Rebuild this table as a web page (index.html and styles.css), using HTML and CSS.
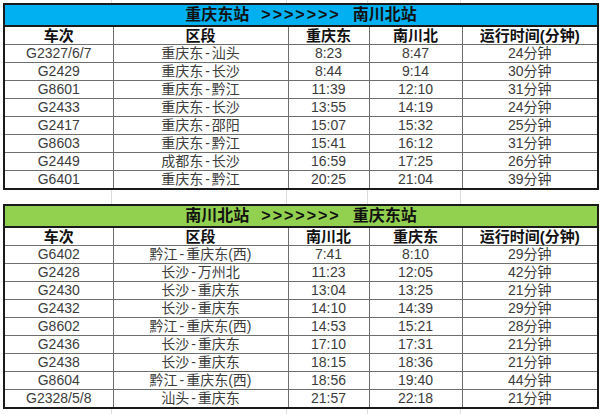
FILE: index.html
```html
<!DOCTYPE html>
<html lang="zh">
<head>
<meta charset="utf-8">
<title>重庆东站 - 南川北站 时刻表</title>
<link rel="stylesheet" href="styles.css">
</head>
<body>
<div class="sheet">
  <table class="tt">
    <colgroup><col class="c1"><col class="c2"><col class="c3"><col class="c4"><col class="c5"></colgroup>
    <tr class="title blue"><td colspan="5">重庆东站<span class="arrows">&gt;&gt;&gt;&gt;&gt;&gt;&gt;</span>南川北站</td></tr>
    <tr class="head"><td>车次</td><td>区段</td><td>重庆东</td><td>南川北</td><td>运行时间(分钟)</td></tr>
    <tr><td>G2327/6/7</td><td>重庆东<span class="dash">-</span>汕头</td><td>8:23</td><td>8:47</td><td>24分钟</td></tr>
    <tr><td>G2429</td><td>重庆东<span class="dash">-</span>长沙</td><td>8:44</td><td>9:14</td><td>30分钟</td></tr>
    <tr><td>G8601</td><td>重庆东<span class="dash">-</span>黔江</td><td>11:39</td><td>12:10</td><td>31分钟</td></tr>
    <tr><td>G2433</td><td>重庆东<span class="dash">-</span>长沙</td><td>13:55</td><td>14:19</td><td>24分钟</td></tr>
    <tr><td>G2417</td><td>重庆东<span class="dash">-</span>邵阳</td><td>15:07</td><td>15:32</td><td>25分钟</td></tr>
    <tr><td>G8603</td><td>重庆东<span class="dash">-</span>黔江</td><td>15:41</td><td>16:12</td><td>31分钟</td></tr>
    <tr><td>G2449</td><td>成都东<span class="dash">-</span>长沙</td><td>16:59</td><td>17:25</td><td>26分钟</td></tr>
    <tr><td>G6401</td><td>重庆东<span class="dash">-</span>黔江</td><td>20:25</td><td>21:04</td><td>39分钟</td></tr>
  </table>
  <table class="tt">
    <colgroup><col class="c1"><col class="c2"><col class="c3"><col class="c4"><col class="c5"></colgroup>
    <tr class="title green"><td colspan="5">南川北站<span class="arrows">&gt;&gt;&gt;&gt;&gt;&gt;&gt;</span>重庆东站</td></tr>
    <tr class="head"><td>车次</td><td>区段</td><td>南川北</td><td>重庆东</td><td>运行时间(分钟)</td></tr>
    <tr><td>G6402</td><td>黔江<span class="dash">-</span>重庆东(西)</td><td>7:41</td><td>8:10</td><td>29分钟</td></tr>
    <tr><td>G2428</td><td>长沙<span class="dash">-</span>万州北</td><td>11:23</td><td>12:05</td><td>42分钟</td></tr>
    <tr><td>G2430</td><td>长沙<span class="dash">-</span>重庆东</td><td>13:04</td><td>13:25</td><td>21分钟</td></tr>
    <tr><td>G2432</td><td>长沙<span class="dash">-</span>重庆东</td><td>14:10</td><td>14:39</td><td>29分钟</td></tr>
    <tr><td>G8602</td><td>黔江<span class="dash">-</span>重庆东(西)</td><td>14:53</td><td>15:21</td><td>28分钟</td></tr>
    <tr><td>G2436</td><td>长沙<span class="dash">-</span>重庆东</td><td>17:10</td><td>17:31</td><td>21分钟</td></tr>
    <tr><td>G2438</td><td>长沙<span class="dash">-</span>重庆东</td><td>18:15</td><td>18:36</td><td>21分钟</td></tr>
    <tr><td>G8604</td><td>黔江<span class="dash">-</span>重庆东(西)</td><td>18:56</td><td>19:40</td><td>44分钟</td></tr>
    <tr><td>G2328/5/8</td><td>汕头<span class="dash">-</span>重庆东</td><td>21:57</td><td>22:18</td><td>21分钟</td></tr>
  </table>
</div>
</body>
</html>
```
FILE: styles.css
```css
html, body {
  margin: 0;
  padding: 0;
  background: #ffffff;
}

.sheet {
  width: 600px;
  height: 414px;
  box-sizing: border-box;
  padding: 3px 0 0 3px;
  overflow: hidden;
  font-family: "Liberation Sans", "Noto Sans CJK SC", sans-serif;
  background-color: #ffffff;
  background-image:
    linear-gradient(to right, transparent 111px, #dcdcdc 111px, #dcdcdc 112px, transparent 112px),
    linear-gradient(to right, transparent 286px, #dcdcdc 286px, #dcdcdc 287px, transparent 287px),
    linear-gradient(to right, transparent 367px, #dcdcdc 367px, #dcdcdc 368px, transparent 368px),
    linear-gradient(to right, transparent 460px, #dcdcdc 460px, #dcdcdc 461px, transparent 461px);
}

.tt {
  border-collapse: collapse;
  table-layout: fixed;
  width: 594px;
  border: 2px solid #1a1a1a;
  background: #ffffff;
  margin-bottom: 14px;
}

.c1 { width: 109px; }
.c2 { width: 175px; }
.c3 { width: 81px; }
.c4 { width: 93px; }
.c5 { width: 136px; }

.tt td {
  border: 1px solid #6e6e6e;
  height: 17px;
  padding: 0;
  text-align: center;
  vertical-align: middle;
  font-size: 14px;
  line-height: 17px;
  color: #3c3c3c;
  white-space: nowrap;
  overflow: hidden;
}

.dash {
  padding: 0 2px;
}

.tt .title td {
  height: 20px;
  line-height: 20px;
  font-size: 16px;
  font-weight: bold;
  color: #111111;
  border-bottom: 2px solid #1a1a1a;
}

.arrows {
  display: inline-block;
  margin: 0 12px;
  letter-spacing: 2px;
  font-size: 16px;
}

.tt .blue td { background: #00b0f0; }
.tt .green td { background: #92d050; }

.tt .head td {
  font-size: 15px;
  font-weight: bold;
  color: #111111;
}
```
